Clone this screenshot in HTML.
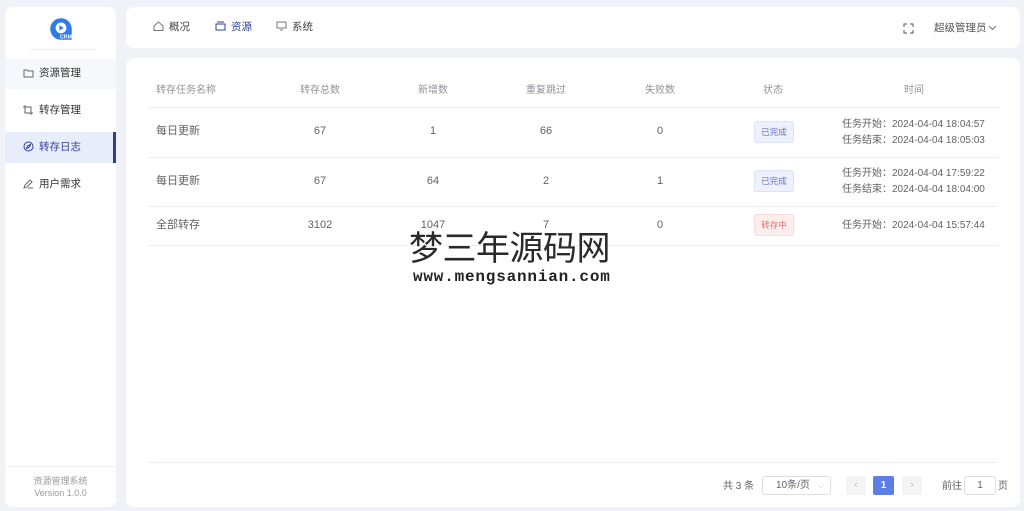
<!DOCTYPE html>
<html><head><meta charset="utf-8"><style>
*{margin:0;padding:0;box-sizing:border-box}
body{width:1024px;height:511px;background:#f0f2f7;font-family:"Liberation Sans","Noto Sans CJK SC",sans-serif;font-size:11px;line-height:13px;color:#606266;position:relative;overflow:hidden}
.card{position:absolute;background:#fff;border-radius:8px}
.side{left:5px;top:7px;width:111px;height:500px}
.top{left:126px;top:7px;width:894px;height:41px}
.main{left:126px;top:58px;width:894px;height:449px}
.menu{position:absolute;left:0;width:111px;height:31px;line-height:31px;padding-left:18px;color:#333;font-size:10.5px}
.menu svg{vertical-align:-2px;margin-right:5px}
.abs{position:absolute}
.hdr{color:#909399;font-size:10px}
.c{position:absolute;text-align:center;width:100px;margin-left:-50px}
.line{position:absolute;left:148px;width:850px;height:1px;background:#ebeef5}
.tag{position:absolute;left:754px;width:40px;height:22px;line-height:20px;text-align:center;font-size:8.5px;border-radius:3px}
.ok{background:#eef1fb;border:1px solid #dde3f7;color:#6271c9}
.ing{background:#fdeeee;border:1px solid #fadbdb;color:#e07070}
.t{position:absolute;left:842px;font-size:10px;color:#606266}
</style></head><body>
<div class="card side">
 <svg class="abs" style="left:42px;top:9px" width="28" height="26" viewBox="0 0 26 24"><path d="M13 2a10 10 0 1 0 0 20h10V12A10 10 0 0 0 13 2z" fill="#2f7ce8"/><circle cx="13" cy="11" r="5" fill="#fff"/><path d="M11.5 8.5l4 2.5-4 2.5z" fill="#2f7ce8"/><text x="12" y="21" font-size="5" fill="#fff" font-weight="bold" font-family="Liberation Sans">CRM</text></svg>
 <div class="abs" style="left:25px;top:42px;width:66px;height:1px;background:#eee"></div>
 <div class="menu" style="top:51px;background:#f7f8fb"><svg width="11" height="10" viewBox="0 0 11 10"><path d="M1 2h3l1 1h5v6H1z" fill="none" stroke="#666"/></svg>资源管理</div>
 <div class="menu" style="top:88px"><svg width="11" height="10" viewBox="0 0 11 10"><path d="M2 0v8h8M0 2h8v8" fill="none" stroke="#666"/></svg>转存管理</div>
 <div class="menu" style="top:125px;background:#e8edfb;color:#2f3f9a"><svg width="11" height="11" viewBox="0 0 11 11"><circle cx="5.5" cy="5.5" r="4.5" fill="none" stroke="#2f3f9a"/><path d="M7.5 3.5L4.5 5 3.5 7.5 6.5 6z" fill="none" stroke="#2f3f9a"/></svg>转存日志<div class="abs" style="right:0;top:0;width:3px;height:31px;background:#2f3f9a"></div></div>
 <div class="menu" style="top:162px"><svg width="11" height="10" viewBox="0 0 11 10"><path d="M1 9l1-3 5-5 2 2-5 5zM5 9h5" fill="none" stroke="#666"/></svg>用户需求</div>
 <div class="abs" style="left:0;top:459px;width:111px;height:1px;background:#eee"></div>
 <div class="abs" style="left:0;top:468px;width:111px;text-align:center;font-size:9px;color:#999;line-height:12px">资源管理系统<br>Version 1.0.0</div>
</div>
<div class="card top">
 <div class="abs" style="left:27px;top:14px;font-size:10.5px;color:#444"><svg width="11" height="10" viewBox="0 0 11 10" style="vertical-align:-1px;margin-right:5px"><path d="M1 5L5.5 1 10 5v4.5H1z" fill="none" stroke="#777"/></svg>概况</div>
 <div class="abs" style="left:89px;top:14px;font-size:10.5px;color:#2f3f9a"><svg width="11" height="10" viewBox="0 0 11 10" style="vertical-align:-1px;margin-right:5px"><rect x="1" y="3" width="9" height="6" fill="none" stroke="#2f3f9a"/><path d="M2 1h7" stroke="#2f3f9a"/></svg>资源</div>
 <div class="abs" style="left:150px;top:14px;font-size:10.5px;color:#444"><svg width="11" height="10" viewBox="0 0 11 10" style="vertical-align:-1px;margin-right:5px"><path d="M1 1h9v6H1zM4 9h3" fill="none" stroke="#777"/></svg>系统</div>
 <svg class="abs" style="left:777px;top:16px" width="11" height="11" viewBox="0 0 11 11"><path d="M1 4V1h3M7 1h3v3M10 7v3H7M4 10H1V7" fill="none" stroke="#555"/></svg>
 <div class="abs" style="left:808px;top:15px;font-size:10.5px;color:#555">超级管理员<svg width="9" height="6" viewBox="0 0 9 6" style="margin-left:1px"><path d="M1 1l3.5 3.5L8 1" fill="none" stroke="#777"/></svg></div>
</div>
<div class="card main"></div>
<div class="abs hdr" style="left:156px;top:84px">转存任务名称</div>
<div class="c hdr" style="left:320px;top:84px">转存总数</div>
<div class="c hdr" style="left:433px;top:84px">新增数</div>
<div class="c hdr" style="left:546px;top:84px">重复跳过</div>
<div class="c hdr" style="left:660px;top:84px">失败数</div>
<div class="c hdr" style="left:773px;top:84px">状态</div>
<div class="c hdr" style="left:914px;top:84px">时间</div>
<div class="line" style="top:107px"></div>
<div class="line" style="top:157px"></div>
<div class="line" style="top:206px"></div>
<div class="line" style="top:245px"></div>
<div class="abs" style="left:156px;top:125px">每日更新</div>
<div class="c" style="left:320px;top:125px">67</div><div class="c" style="left:433px;top:125px">1</div><div class="c" style="left:546px;top:125px">66</div><div class="c" style="left:660px;top:125px">0</div>
<div class="tag ok" style="top:121px">已完成</div>
<div class="t" style="top:118px">任务开始：2024-04-04 18:04:57</div><div class="t" style="top:134px">任务结束：2024-04-04 18:05:03</div>
<div class="abs" style="left:156px;top:175px">每日更新</div>
<div class="c" style="left:320px;top:175px">67</div><div class="c" style="left:433px;top:175px">64</div><div class="c" style="left:546px;top:175px">2</div><div class="c" style="left:660px;top:175px">1</div>
<div class="tag ok" style="top:170px">已完成</div>
<div class="t" style="top:167px">任务开始：2024-04-04 17:59:22</div><div class="t" style="top:183px">任务结束：2024-04-04 18:04:00</div>
<div class="abs" style="left:156px;top:219px">全部转存</div>
<div class="c" style="left:320px;top:219px">3102</div><div class="c" style="left:433px;top:219px">1047</div><div class="c" style="left:546px;top:219px">7</div><div class="c" style="left:660px;top:219px">0</div>
<div class="tag ing" style="top:214px">转存中</div>
<div class="t" style="top:219px">任务开始：2024-04-04 15:57:44</div>
<div class="abs" style="left:409px;top:224px;font-size:34px;line-height:44px;color:#2a2a2a;font-family:'Noto Sans CJK SC',sans-serif;font-weight:400;letter-spacing:-0.5px">梦三年源码网</div>
<div class="abs" style="left:413px;top:268px;font-size:16px;line-height:18px;font-weight:bold;color:#222;font-family:'Liberation Mono',monospace;letter-spacing:0.8px">www.mengsannian.com</div>
<div class="line" style="top:462px"></div>
<div class="abs" style="left:723px;top:480px;font-size:10px">共 3 条</div>
<div class="abs" style="left:762px;top:476px;width:69px;height:19px;border:1px solid #dcdfe6;border-radius:3px;font-size:10px;line-height:17px;padding-left:13px">10条/页<span style="position:absolute;right:6px;color:#bbb;font-size:8px">⌵</span></div>
<div class="abs" style="left:846px;top:476px;width:20px;height:19px;background:#f4f4f5;border-radius:2px;color:#bbb;text-align:center;line-height:19px">‹</div>
<div class="abs" style="left:873px;top:476px;width:21px;height:19px;background:#5b7ee8;border-radius:2px;color:#fff;text-align:center;line-height:19px;font-weight:bold;font-size:10px">1</div>
<div class="abs" style="left:902px;top:476px;width:20px;height:19px;background:#f4f4f5;border-radius:2px;color:#bbb;text-align:center;line-height:19px">›</div>
<div class="abs" style="left:942px;top:480px;font-size:10px">前往</div>
<div class="abs" style="left:964px;top:476px;width:32px;height:19px;border:1px solid #dcdfe6;border-radius:3px;text-align:center;line-height:17px;font-size:10px">1</div>
<div class="abs" style="left:998px;top:480px;font-size:10px">页</div>
</body></html>
